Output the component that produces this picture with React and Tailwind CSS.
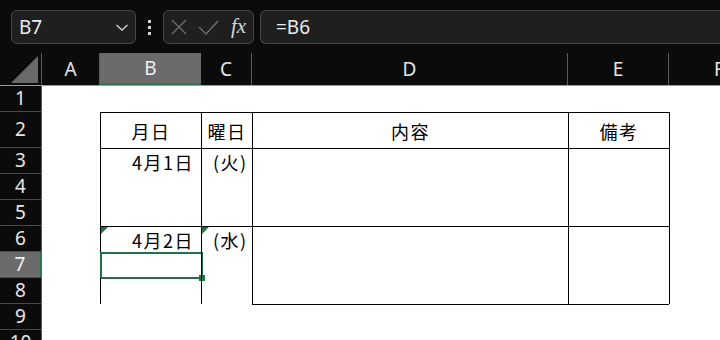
import React from 'react';

const UI_FONT = { fontFamily: '"Noto Sans", "Open Sans", sans-serif' };
const JP_FONT = { fontFamily: '"Noto Sans CJK JP", "Noto Sans", sans-serif' };

const COLS = [
  { key: 'A', w: 'w-[58px]' },
  { key: 'B', w: 'w-[101px]' },
  { key: 'C', w: 'w-[51px]' },
  { key: 'D', w: 'w-[316px]' },
  { key: 'E', w: 'w-[101px]' },
  { key: 'F', w: 'w-[101px]' },
];

const ROWS = [
  { n: 1, h: 'h-[26px]' },
  { n: 2, h: 'h-[36px]' },
  { n: 3, h: 'h-[26px]' },
  { n: 4, h: 'h-[26px]' },
  { n: 5, h: 'h-[26px]' },
  { n: 6, h: 'h-[26px]' },
  { n: 7, h: 'h-[26px]' },
  { n: 8, h: 'h-[26px]' },
  { n: 9, h: 'h-[26px]' },
  { n: 10, h: 'h-[26px]' },
];

const CELLS = {
  B2: { text: '月日', align: 'center' },
  C2: { text: '曜日', align: 'center' },
  D2: { text: '内容', align: 'center' },
  E2: { text: '備考', align: 'center' },
  B3: { text: '4月1日', align: 'right' },
  C3: { text: '(火)', align: 'left' },
  B6: { text: '4月2日', align: 'right', flag: true },
  C6: { text: '(水)', align: 'left', flag: true },
};

const inTable = (col) => ['B', 'C', 'D', 'E'].includes(col);

const Cell = ({ col, row }) => {
  const hasLeft = row.n >= 2 && row.n <= 8 && col.key !== 'A';
  const hasTop =
    ([2, 3, 6].includes(row.n) && inTable(col.key)) ||
    (row.n === 9 && (col.key === 'D' || col.key === 'E'));
  const data = CELLS[`${col.key}${row.n}`];
  const selected = col.key === 'B' && row.n === 7;

  let alignCls = 'justify-center';
  if (data?.align === 'right') alignCls = 'justify-end pr-[7px]';
  if (data?.align === 'left') alignCls = 'justify-start pl-[11px]';

  return (
    <div
      className={`relative shrink-0 flex items-center h-full ${col.w} ${alignCls} ${
        hasLeft ? 'border-l border-l-black' : ''
      } ${hasTop ? 'border-t border-t-black' : ''}`}
    >
      {data && (
        <span className="text-[18px] leading-none text-black tracking-[1.5px]" style={JP_FONT}>
          {data.text}
        </span>
      )}
      {data?.flag && (
        <div className="absolute left-0 top-0 w-0 h-0 border-t-[7px] border-r-[7px] border-t-[#217346] border-r-transparent" />
      )}
      {selected && (
        <div className="absolute left-[-1px] top-0 w-[103px] h-[27px] border-2 border-[#217346]">
          <div className="absolute right-[-4px] bottom-[-4px] w-[6px] h-[6px] bg-[#217346]" />
        </div>
      )}
    </div>
  );
};

export default function App() {
  return (
    <div className="w-[720px] h-[340px] overflow-hidden bg-[#0b0b0b] select-none">
      {/* formula bar */}
      <div className="flex items-start h-[53px] pt-[10px] pl-[11px]">
        <div className="w-[125px] h-[34px] shrink-0 flex items-center justify-between pl-[7px] pr-[6px] rounded-[6px] bg-[#1f1f1f] border border-[#484848]">
          <span className="text-[19px] text-[#ececec] leading-none" style={UI_FONT}>B7</span>
          <svg width="14" height="10" viewBox="0 0 14 10" fill="none">
            <path d="M1.5 3l5.5 5 5.5-5" stroke="#cfcfcf" strokeWidth="1.4" />
          </svg>
        </div>
        <div className="w-[27px] h-[34px] shrink-0 flex flex-col items-center justify-center gap-[3px]">
          <div className="w-[3px] h-[3px] bg-[#d8d8d8]" />
          <div className="w-[3px] h-[3px] bg-[#d8d8d8]" />
          <div className="w-[3px] h-[3px] bg-[#d8d8d8]" />
        </div>
        <div className="w-[91px] h-[34px] shrink-0 flex items-center pl-[7px] rounded-[6px] bg-[#1f1f1f] border border-[#484848]">
          <svg width="16" height="16" viewBox="0 0 16 16" fill="none">
            <path d="M1 1l14 14M15 1L1 15" stroke="#6e6e6e" strokeWidth="1.4" />
          </svg>
          <svg className="ml-[11px]" width="21" height="15" viewBox="0 0 21 15" fill="none">
            <path d="M1 7l7 7L20 1" stroke="#6e6e6e" strokeWidth="1.4" />
          </svg>
          <span
            className="ml-[12px] text-[21px] italic leading-none text-[#d6d6d6] -mt-[2px]"
            style={{ fontFamily: '"Liberation Serif", "DejaVu Serif", serif' }}
          >
            fx
          </span>
        </div>
        <div className="flex-1 h-[34px] ml-[6px] flex items-center pl-[15px] rounded-l-[6px] bg-[#1f1f1f] border border-r-0 border-[#484848]">
          <span className="text-[19px] text-[#ececec] leading-none" style={UI_FONT}>=B6</span>
        </div>
      </div>

      {/* column headers */}
      <div className="flex h-[33px] border-b border-b-[#9a9a9a]">
        <div className="w-[42px] shrink-0 border-r border-r-[#5c5c5c] flex items-end justify-end pr-[2px] pb-[2px]">
          <svg width="28" height="27" viewBox="0 0 28 27">
            <path d="M0 27L27 0V27Z" fill="#6a6a6a" />
          </svg>
        </div>
        {COLS.map((col) => (
          <div
            key={col.key}
            className={`shrink-0 flex items-center justify-center ${col.w} ${
              col.key === 'B'
                ? 'bg-[#6b6b6b] border-b-2 border-b-[#2f7550] text-[#f0f0f0]'
                : 'border-r border-r-[#5c5c5c] text-[#e6e6e6]'
            }`}
          >
            <span className="text-[19px] leading-none" style={UI_FONT}>{col.key}</span>
          </div>
        ))}
      </div>

      {/* sheet */}
      {ROWS.map((row) => (
        <div key={row.n} className={`flex ${row.h}`}>
          <div
            className={`w-[42px] shrink-0 flex items-center justify-center border-b border-b-[#4a4a4a] ${
              row.n === 7
                ? 'bg-[#6b6b6b] border-r-2 border-r-[#2f7550] text-[#f0f0f0]'
                : 'bg-[#0b0b0b] border-r border-r-[#5c5c5c] text-[#e6e6e6]'
            }`}
          >
            <span className="text-[19px] leading-none" style={UI_FONT}>{row.n}</span>
          </div>
          <div className="flex flex-1 bg-white">
            {COLS.map((col) => (
              <Cell key={col.key} col={col} row={row} />
            ))}
          </div>
        </div>
      ))}
    </div>
  );
}
